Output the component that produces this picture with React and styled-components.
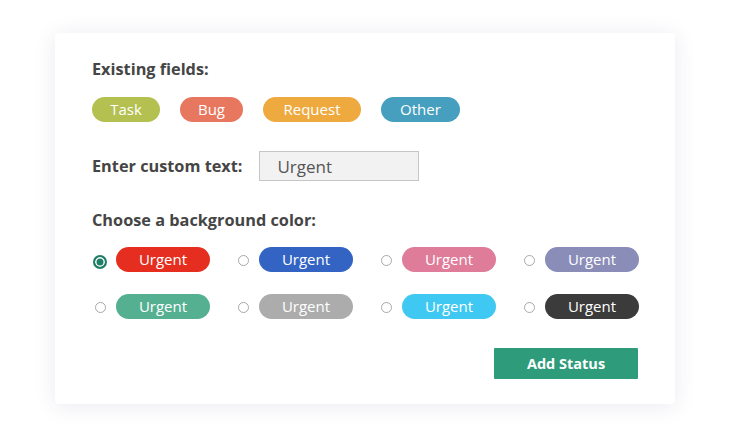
import React, { useState } from "react";
import styled, { createGlobalStyle } from "styled-components";

const GlobalStyle = createGlobalStyle`
  html, body {
    margin: 0;
    min-height: 100vh;
    background: #ffffff;
    font-family: "Open Sans", "Noto Sans", sans-serif;
  }
  #root {
    padding: 33px 0 0 55px;
  }
`;

const Card = styled.div`
  box-sizing: border-box;
  width: 620px;
  padding: 26px 37px 25px 37px;
  background: #fff;
  border-radius: 4px;
  box-shadow: 0 2px 22px rgba(40, 50, 100, 0.1);
  display: flex;
  flex-direction: column;
`;

const Heading = styled.div`
  font-size: 16.3px;
  line-height: 20px;
  font-weight: 700;
  color: #454545;
  margin-top: ${(p) => p.$mt || 0}px;
`;

const TagRow = styled.div`
  display: flex;
  gap: 20px;
  margin-top: 18px;
`;

const Tag = styled.span`
  box-sizing: border-box;
  width: ${(p) => p.$w}px;
  height: 25px;
  border-radius: 13px;
  background: ${(p) => p.$bg};
  color: #fff;
  font-size: 15px;
  line-height: 25px;
  text-align: center;
`;

const CustomRow = styled.div`
  display: flex;
  align-items: center;
  gap: 17px;
  margin-top: 29px;
`;

const Label = styled.label`
  font-size: 16.3px;
  font-weight: 700;
  color: #454545;
`;

const TextInput = styled.input`
  box-sizing: border-box;
  width: 160px;
  height: 30px;
  padding: 0 17px;
  background: #f2f2f2;
  border: 1px solid #c6c6c6;
  font-family: inherit;
  font-size: 17px;
  color: #555;
  outline: none;
`;

const ColorGrid = styled.div`
  display: grid;
  grid-template-columns: repeat(3, 143px) auto;
  row-gap: 22px;
  margin-top: 17px;
  margin-left: 1px;
`;

const Option = styled.label`
  display: flex;
  align-items: center;
  cursor: pointer;
`;

const RadioBox = styled.span`
  width: 14px;
  height: 14px;
  margin-right: 9px;
  margin-top: ${(p) => (p.$on ? 4 : 2)}px;
  display: flex;
  align-items: center;
  justify-content: center;
`;

const Radio = styled.span`
  box-sizing: border-box;
  border-radius: 50%;
  ${(p) =>
    p.$on
      ? `
    width: 14px;
    height: 14px;
    border: 2px solid #1f7e66;
    background: #1f7e66;
    box-shadow: inset 0 0 0 1.5px #fff;
  `
      : `
    width: 11px;
    height: 11px;
    border: 1px solid #a9a9a9;
    background: #fff;
  `}
`;

const Pill = styled.span`
  width: 94px;
  height: 25px;
  border-radius: 13px;
  background: ${(p) => p.$bg};
  color: #fff;
  font-size: 15px;
  line-height: 25px;
  text-align: center;
`;

const Footer = styled.div`
  display: flex;
  justify-content: flex-end;
  margin-top: 29px;
`;

const Button = styled.button`
  width: 144px;
  height: 31px;
  border: none;
  border-radius: 1px;
  background: #2e9b7b;
  color: #fff;
  font-family: inherit;
  font-size: 14.5px;
  font-weight: 700;
  cursor: pointer;
`;

const tags = [
  { name: "Task", bg: "#b4c04f", w: 68 },
  { name: "Bug", bg: "#e8775f", w: 63 },
  { name: "Request", bg: "#eeaa3f", w: 98 },
  { name: "Other", bg: "#469fbe", w: 79 },
];

const colors = [
  "#e52e1f",
  "#3364c4",
  "#de7c9a",
  "#8a8db7",
  "#55b092",
  "#acacac",
  "#3fc8f2",
  "#3b3b3b",
];

export default function App() {
  const [text, setText] = useState("Urgent");
  const [picked, setPicked] = useState(0);

  return (
    <>
      <GlobalStyle />
      <Card>
        <Heading>Existing fields:</Heading>
        <TagRow>
          {tags.map((t) => (
            <Tag key={t.name} $bg={t.bg} $w={t.w}>
              {t.name}
            </Tag>
          ))}
        </TagRow>

        <CustomRow>
          <Label htmlFor="custom">Enter custom text:</Label>
          <TextInput
            id="custom"
            value={text}
            onChange={(e) => setText(e.target.value)}
          />
        </CustomRow>

        <Heading $mt={29}>Choose a background color:</Heading>
        <ColorGrid>
          {colors.map((c, i) => (
            <Option key={c} onClick={() => setPicked(i)}>
              <RadioBox $on={picked === i}>
                <Radio $on={picked === i} />
              </RadioBox>
              <Pill $bg={c}>{text}</Pill>
            </Option>
          ))}
        </ColorGrid>

        <Footer>
          <Button>Add Status</Button>
        </Footer>
      </Card>
    </>
  );
}
